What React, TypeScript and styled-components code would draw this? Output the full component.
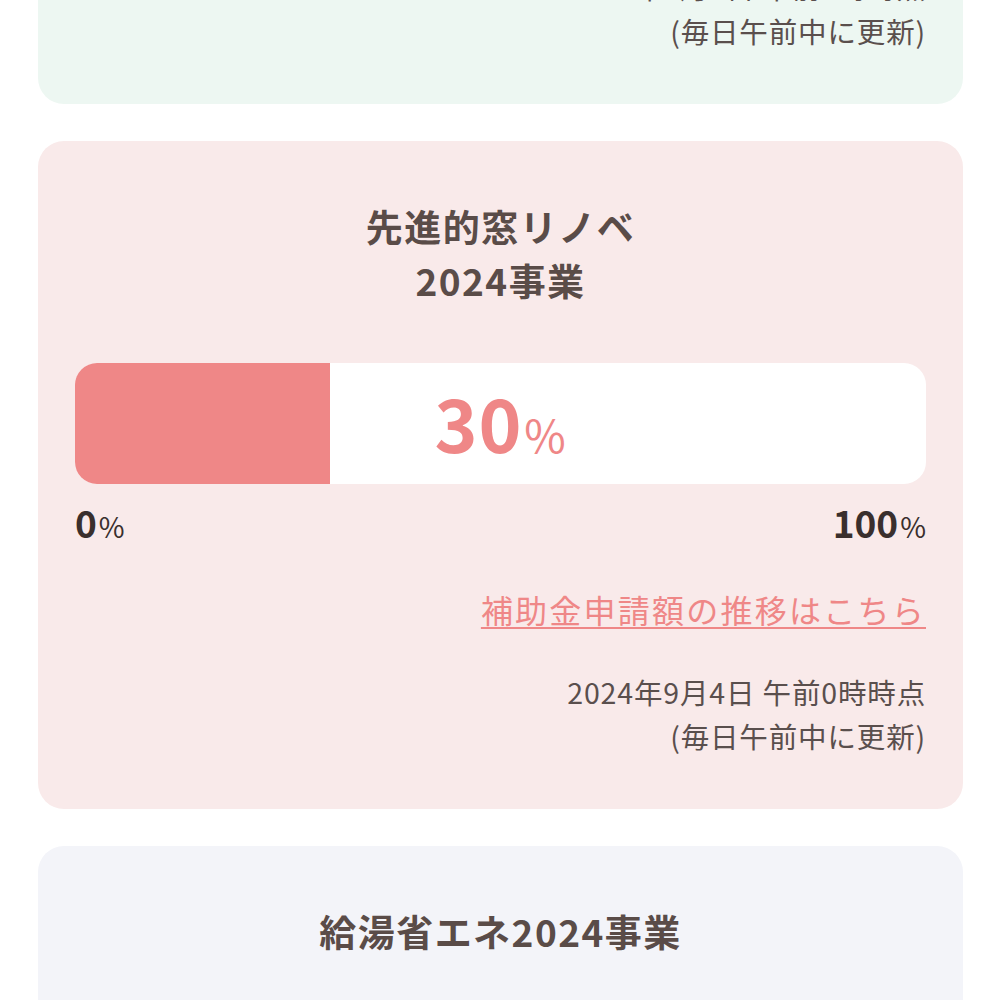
import React from "react";
import styled, { createGlobalStyle } from "styled-components";

const Global = createGlobalStyle`
  html, body { margin: 0; padding: 0; background: #ffffff; }
  body {
    font-family: "Noto Sans CJK JP", "Noto Sans", sans-serif;
    color: #5a4c48;
    overflow: hidden;
  }
`;

type Tone = "green" | "pink" | "lavender";

const toneBg: Record<Tone, string> = {
  green: "#edf7f2",
  pink: "#f9eaea",
  lavender: "#f3f4f9",
};

const toneAccent: Record<Tone, string> = {
  green: "#6fc4a0",
  pink: "#ef8787",
  lavender: "#8e9ad6",
};

const Page = styled.main`
  display: flex;
  flex-direction: column;
  gap: 37px;
  padding: 0 37px 0 38px;
  margin-top: -564px;
`;

const Card = styled.section<{ $tone: Tone }>`
  background: ${(p) => toneBg[p.$tone]};
  border-radius: 26px;
  padding: 58px 37px 51px;
  display: flex;
  flex-direction: column;
`;

const Title = styled.h2`
  margin: 0;
  font-size: 37px;
  line-height: 54px;
  font-weight: 700;
  letter-spacing: 0.04em;
  text-align: center;
  color: #5a4c48;
`;

const Track = styled.div`
  position: relative;
  margin-top: 56px;
  height: 121px;
  background: #ffffff;
  border-radius: 22px;
  overflow: hidden;
  display: flex;
  align-items: center;
  justify-content: center;
`;

const Fill = styled.div<{ $tone: Tone }>`
  position: absolute;
  left: 0;
  top: 0;
  bottom: 0;
  background: ${(p) => toneAccent[p.$tone]};
`;

const Rate = styled.div<{ $tone: Tone }>`
  position: relative;
  padding-bottom: 4px;
  color: ${(p) => toneAccent[p.$tone]};
  font-size: 73px;
  font-weight: 700;
  line-height: 1;
  letter-spacing: 0.01em;
`;

const Unit = styled.span<{ $size: number }>`
  font-size: ${(p) => p.$size}px;
  font-weight: 400;
  margin-left: 2px;
`;

const Scale = styled.div`
  display: flex;
  justify-content: space-between;
  margin-top: 18px;
  color: #3a2f2d;
  font-size: 37px;
  font-weight: 700;
  line-height: 40px;
`;

const LinkRow = styled.div`
  display: flex;
  justify-content: flex-end;
  margin-top: 39px;
`;

const TrendLink = styled.a<{ $tone: Tone }>`
  color: ${(p) => toneAccent[p.$tone]};
  font-size: 32px;
  line-height: 48px;
  letter-spacing: 0.07em;
  text-decoration: underline;
  text-underline-offset: 4px;
  text-decoration-thickness: 2px;
  cursor: pointer;
`;

const Stamp = styled.p`
  margin: 37px 0 0;
  text-align: right;
  font-size: 28.5px;
  line-height: 44px;
  color: #5a4f4d;
  letter-spacing: 0.03em;
`;

type Program = {
  tone: Tone;
  title: React.ReactNode;
  rate: number;
};

const programs: Program[] = [
  {
    tone: "green",
    title: (
      <>
        子育てエコホーム
        <br />
        支援事業
      </>
    ),
    rate: 45,
  },
  {
    tone: "pink",
    title: (
      <>
        先進的窓リノベ
        <br />
        2024事業
      </>
    ),
    rate: 30,
  },
];

function ProgressCard({ tone, title, rate }: Program) {
  return (
    <Card $tone={tone}>
      <Title>{title}</Title>
      <Track>
        <Fill $tone={tone} style={{ width: `${rate}%` }} />
        <Rate $tone={tone}>
          {rate}
          <Unit $size={45}>%</Unit>
        </Rate>
      </Track>
      <Scale>
        <span>
          0<Unit $size={28}>%</Unit>
        </span>
        <span>
          100<Unit $size={28}>%</Unit>
        </span>
      </Scale>
      <LinkRow>
        <TrendLink $tone={tone}>補助金申請額の推移はこちら</TrendLink>
      </LinkRow>
      <Stamp>
        2024年9月4日 午前0時時点
        <br />
        (毎日午前中に更新)
      </Stamp>
    </Card>
  );
}

export default function App() {
  return (
    <>
      <Global />
      <Page>
        {programs.map((p, i) => (
          <ProgressCard key={i} {...p} />
        ))}
        <Card $tone="lavender">
          <Title>給湯省エネ2024事業</Title>
          <Track />
        </Card>
      </Page>
    </>
  );
}
